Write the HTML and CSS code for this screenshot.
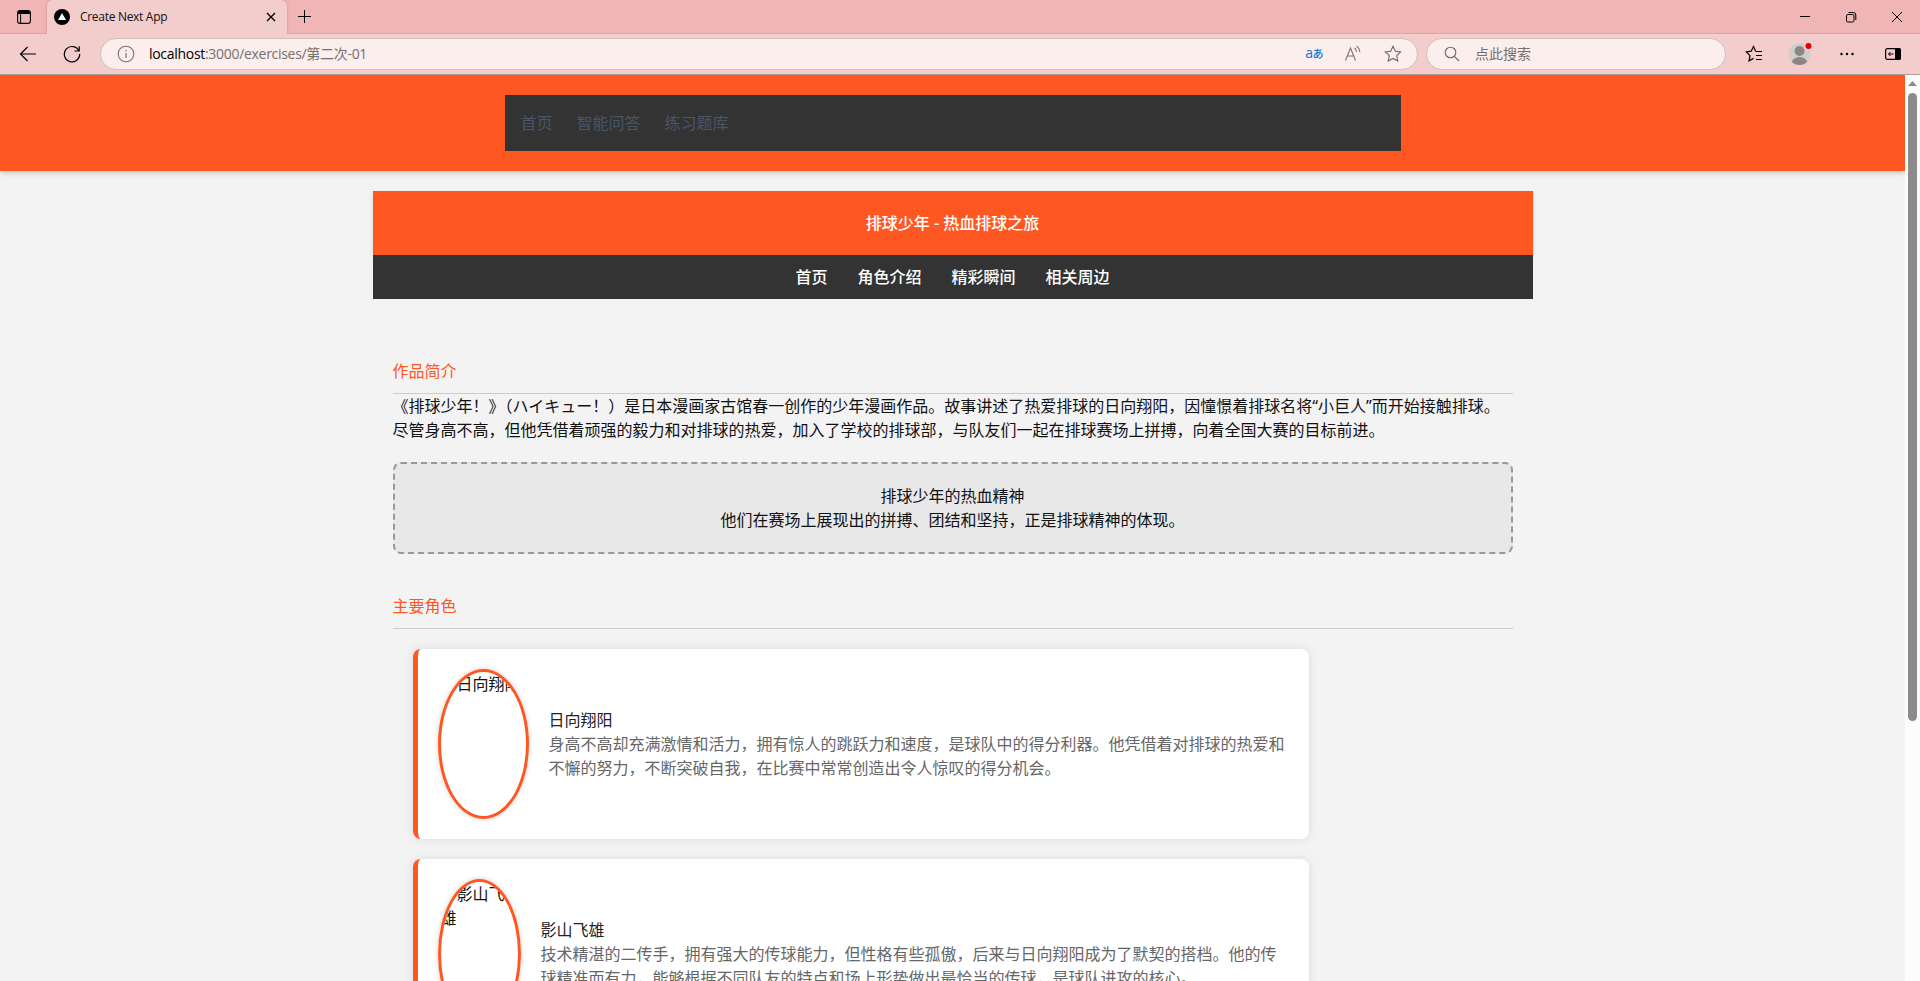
FILE: index.html
```html
<!DOCTYPE html>
<html lang="zh-CN">
<head>
<meta charset="utf-8">
<title>Create Next App</title>
<link rel="stylesheet" href="styles.css">
</head>
<body>
<div class="tabs">
  <svg class="tab-menu" width="14" height="14" viewBox="0 0 14 14"><rect x=".6" y=".6" width="12.8" height="12.8" rx="2.4" fill="none" stroke="#000" stroke-width="1.1"/><path d="M1 4V2.5Q1 1 2.5 1h9Q13 1 13 2.500V4z"/><path d="M3.600 4v9.500" stroke="#000"/></svg>
  <div class="tab">
    <svg width="16" height="16" viewBox="0 0 16 16"><circle cx="8" cy="8" r="8"/><path d="M8 4l4 7H4z" fill="#fff"/></svg>
    <span class="tab-title">Create Next App</span>
    <svg width="10" height="10" viewBox="0 0 10 10"><path d="M1 1l8 8M9 1L1 9" stroke="#000" stroke-width="1.300"/></svg>
  </div>
  <svg class="tab-add" width="14" height="14" viewBox="0 0 14 14"><path d="M6.500 0v13M0 6.500h13" stroke="#000" stroke-width="1"/></svg>
  <div class="window-buttons">
    <svg width="12" height="12" viewBox="0 0 12 12"><path d="M1 5.500h10" stroke="#000"/></svg>
    <svg width="12" height="12" viewBox="0 0 12 12"><rect x="1.500" y="3.500" width="7.500" height="7.500" rx="1.300" fill="none" stroke="#000"/><path d="M3.500 1.500H8.500Q10.800 1.500 10.800 4V9" fill="none" stroke="#000"/></svg>
    <svg width="12" height="12" viewBox="0 0 12 12"><path d="M1 1l10 10M11 1L1 11" stroke="#000"/></svg>
  </div>
</div>
<div class="toolbar">
  <svg class="back" width="18" height="16" viewBox="0 0 18 16"><path d="M17 8H1.500M8.500 1L1.500 8l7 7" fill="none" stroke="#000" stroke-width="1.200"/></svg>
  <svg class="reload" width="18" height="18" viewBox="0 0 18 18"><path d="M16 6A7.700 7.700 0 1 0 16.700 9M16.200 1.200V6H11.500" fill="none" stroke="#000" stroke-width="1.200"/></svg>
  <div class="address">
    <svg width="18" height="18" viewBox="0 0 18 18"><circle cx="9" cy="9" r="7.800" fill="none" stroke="#7b7372" stroke-width="1.100"/><path d="M9 8v5M9 5v1.500" stroke="#7b7372" stroke-width="1.200"/></svg>
    <span class="url"><b>localhost</b>:3000/exercises/第二次-01</span>
    <span class="translate">a<small>あ</small></span>
    <svg class="read" width="18" height="18" viewBox="0 0 18 18"><path d="M1.500 15.500L6.500 3l5 12.500M3.300 11h6.400M10.500 3q2 1.500 2 4M12.500 1.200q3.300 2 3.300 6" fill="none" stroke="#7b7372" stroke-width="1.100"/></svg>
    <svg class="fav" width="18" height="18" viewBox="0 0 18 18"><path d="M9 1.300l2.300 4.900 5.300.7-3.900 3.700 1 5.400L9 13.400 4.300 16l1-5.400L1.400 6.900l5.300-.7z" fill="none" stroke="#6f6766" stroke-width="1.100"/></svg>
  </div>
  <div class="search">
    <svg width="16" height="16" viewBox="0 0 16 16"><circle cx="6.500" cy="6.500" r="5.300" fill="none" stroke="#6f6766" stroke-width="1.100"/><path d="M10.400 10.400L15 15" stroke="#6f6766" stroke-width="1.100"/></svg>
    <span>点此搜索</span>
  </div>
  <div class="tools">
    <svg width="18" height="18" viewBox="0 0 18 18"><path d="M10.500 6L8.500 1.500 6.200 6.200 1.300 6.900l3.700 3.700-1 5.200 4.500-2.400M10.500 6.500H17M11 10.500h6M11 14.500h6" fill="none" stroke="#000" stroke-width="1.200"/></svg>
    <svg width="24" height="24" viewBox="0 0 24 24"><defs><clipPath id="face"><circle cx="11.500" cy="12" r="11"/></clipPath></defs><circle cx="11.500" cy="12" r="11" fill="#d0cecb"/><circle cx="11.500" cy="9" r="5" fill="#8b8784"/><ellipse cx="11.500" cy="21" rx="7.800" ry="6" fill="#8b8784" clip-path="url(#face)"/><circle cx="20.500" cy="4" r="4" fill="#f3cccc"/><circle cx="20.500" cy="4" r="3" fill="#e60000"/></svg>
    <svg width="16" height="4" viewBox="0 0 16 4"><circle cx="2.500" cy="2" r="1.200"/><circle cx="8" cy="2" r="1.200"/><circle cx="13.500" cy="2" r="1.200"/></svg>
    <svg width="16" height="12" viewBox="0 0 16 12"><rect x=".6" y=".6" width="14.800" height="10.800" rx="2" fill="none" stroke="#000" stroke-width="1.200"/><path d="M10 0h4q2 0 2 2v8q0 2-2 2h-4zM3.500 5.500h5v1h-5z"/><path d="M5.500 4L3.500 6l2 2" fill="none" stroke="#000"/></svg>
  </div>
</div>
<div class="viewport">
  <div class="page">
    <header class="site-header">
      <nav class="site-nav"><a>首页</a><a>智能问答</a><a>练习题库</a></nav>
    </header>
    <div class="container">
      <header class="banner">排球少年 - 热血排球之旅</header>
      <nav class="topics"><a>首页</a><a>角色介绍</a><a>精彩瞬间</a><a>相关周边</a></nav>
      <main>
        <section>
          <h2>作品简介</h2>
          <p>《排球少年！》（ハイキュー！）是日本漫画家古馆春一创作的少年漫画作品。故事讲述了热爱排球的日向翔阳，因憧憬着排球名将“小巨人”而开始接触排球。尽管身高不高，但他凭借着顽强的毅力和对排球的热爱，加入了学校的排球部，与队友们一起在排球赛场上拼搏，向着全国大赛的目标前进。</p>
          <div class="spirit"><p>排球少年的热血精神</p><p>他们在赛场上展现出的拼搏、团结和坚持，正是排球精神的体现。</p></div>
        </section>
        <section>
          <h2>主要角色</h2>
          <div class="cards">
            <article class="card">
              <div class="portrait hinata">日向翔阳</div>
              <div class="info"><h3>日向翔阳</h3><p>身高不高却充满激情和活力，拥有惊人的跳跃力和速度，是球队中的得分利器。他凭借着对排球的热爱和不懈的努力，不断突破自我，在比赛中常常创造出令人惊叹的得分机会。</p></div>
            </article>
            <article class="card">
              <div class="portrait kageyama">影山飞雄</div>
              <div class="info"><h3>影山飞雄</h3><p>技术精湛的二传手，拥有强大的传球能力，但性格有些孤傲，后来与日向翔阳成为了默契的搭档。他的传球精准而有力，能够根据不同队友的特点和场上形势做出最恰当的传球，是球队进攻的核心。</p></div>
            </article>
          </div>
        </section>
      </main>
    </div>
  </div>
  <div class="scrollbar"><svg width="9" height="5" viewBox="0 0 9 5"><path d="M4.500 0L9 5H0z" fill="#8b8b8b"/></svg><div class="thumb"></div></div>
</div>
</body>
</html>
```
FILE: styles.css
```css
* { box-sizing: border-box; margin: 0; padding: 0; }
html { height: 981px; overflow: hidden; }
body {
  height: 981px;
  display: flex;
  flex-direction: column;
  overflow: hidden;
  font: 16px/24px "Noto Sans", "Noto Sans CJK SC", sans-serif;
  color: #111;
}
svg { display: block; flex: none; }
h2, h3 { font-size: 16px; font-weight: 400; }

.tabs {
  height: 34px;
  flex: none;
  display: flex;
  align-items: center;
  padding-left: 17px;
  background: #f0b6b6;
  box-shadow: inset 0 -2px 1px -1px #dfa3a4;
}
.tab {
  align-self: stretch;
  width: 240px;
  margin-left: 16px;
  padding: 0 11px 0 7px;
  display: flex;
  align-items: center;
  background: #f3cccc;
  border-radius: 6px 6px 0 0;
  box-shadow: 0 0 3px #c98f90;
  clip-path: inset(0 -4px 0 -4px);
}
.tab-title {
  flex: 1;
  margin-left: 10px;
  font: 12px/16px "Open Sans", sans-serif;
  letter-spacing: -.3px;
}
.tab-add { margin-left: 11px; }
.window-buttons { display: flex; gap: 34px; margin-left: auto; padding-right: 17px; }

.toolbar {
  height: 41px;
  flex: none;
  display: flex;
  align-items: center;
  padding: 0 19px 1px 19px;
  background: #f3cccc;
  border-bottom: 1px solid #b09a9b;
}
.reload { margin-left: 26px; }
.address, .search {
  height: 32px;
  display: flex;
  align-items: center;
  background: #fbeeec;
  border: 1px solid #cfc0c0;
  border-radius: 16px;
  font: 14px/20px "Open Sans", "Noto Sans CJK SC", sans-serif;
  color: #767070;
}
.address { width: 1318px; margin-left: 19px; padding: 0 15px 0 16px; }
.url { flex: 1; margin-left: 14px; letter-spacing: -.3px; }
.url b { font-weight: 400; color: #000; }
.translate { color: #0a78d0; font-size: 14px; letter-spacing: -.5px; }
.translate small { font-size: 11px; font-weight: 500; }
.read { margin-left: 21px; }
.fav { margin-left: 22px; }
.search { width: 300px; margin-left: 8px; padding-left: 17px; }
.search span { margin-left: 15px; }
.tools {
  flex: 1;
  display: grid;
  grid-template-columns: repeat(4, 46.3px);
  justify-content: end;
  justify-items: center;
  align-items: center;
  margin-right: -15px;
}

.viewport { flex: 1; min-height: 0; display: flex; }
.page { flex: 1; background: #f3f3f3; overflow: hidden; }
.scrollbar {
  width: 15px;
  padding-top: 6px;
  display: flex;
  flex-direction: column;
  align-items: center;
  background: #fcfcfc;
}
.thumb { width: 9px; height: 628px; margin-top: 7px; border-radius: 5px; background: #8b8b8b; }

.site-header { padding: 20px; background: #ff5722; box-shadow: 0 2px 5px rgba(0, 0, 0, .2); }
.site-nav {
  width: 896px;
  height: 56px;
  margin: 0 auto;
  padding: 0 16px;
  display: flex;
  align-items: center;
  gap: 24px;
  background: #333;
  color: #4a5568;
}
.container { width: 1160px; margin: 20px auto 0; }
.banner {
  padding: 20px;
  text-align: center;
  font-weight: 500;
  color: #fff;
  background: #ff5722;
  box-shadow: 0 2px 5px rgba(0, 0, 0, .1);
}
.topics {
  position: relative;
  padding: 10px;
  display: flex;
  justify-content: center;
  gap: 30px;
  font-weight: 500;
  color: #fff;
  background: #333;
}
main { padding: 60px 20px 0; }
section { margin-bottom: 40px; }
h2 { padding-bottom: 10px; border-bottom: 1px solid #ccc; color: #ff5722; }
.spirit {
  margin-top: 20px;
  padding: 20px;
  text-align: center;
  background: #e8e8e8;
  border: 2px dashed #999;
  border-radius: 8px;
}
.cards { padding: 20px 0 0 20px; display: flex; flex-direction: column; gap: 20px; }
.card {
  width: 896px;
  padding: 20px;
  display: flex;
  align-items: center;
  gap: 20px;
  background: #fff;
  border-left: 5px solid #ff5722;
  border-radius: 8px;
  box-shadow: 0 0 10px rgba(0, 0, 0, .1);
}
.portrait {
  height: 150px;
  flex: none;
  overflow: hidden;
  text-indent: 16px;
  border: 3px solid #ff5722;
  border-radius: 50%;
  box-shadow: 0 0 5px rgba(0, 0, 0, .2);
}
.hinata { width: 91px; white-space: nowrap; }
.kageyama { width: 83px; }
.info { flex: 1; }
.info h3 { color: #222; }
.info p { color: #666; }
```
